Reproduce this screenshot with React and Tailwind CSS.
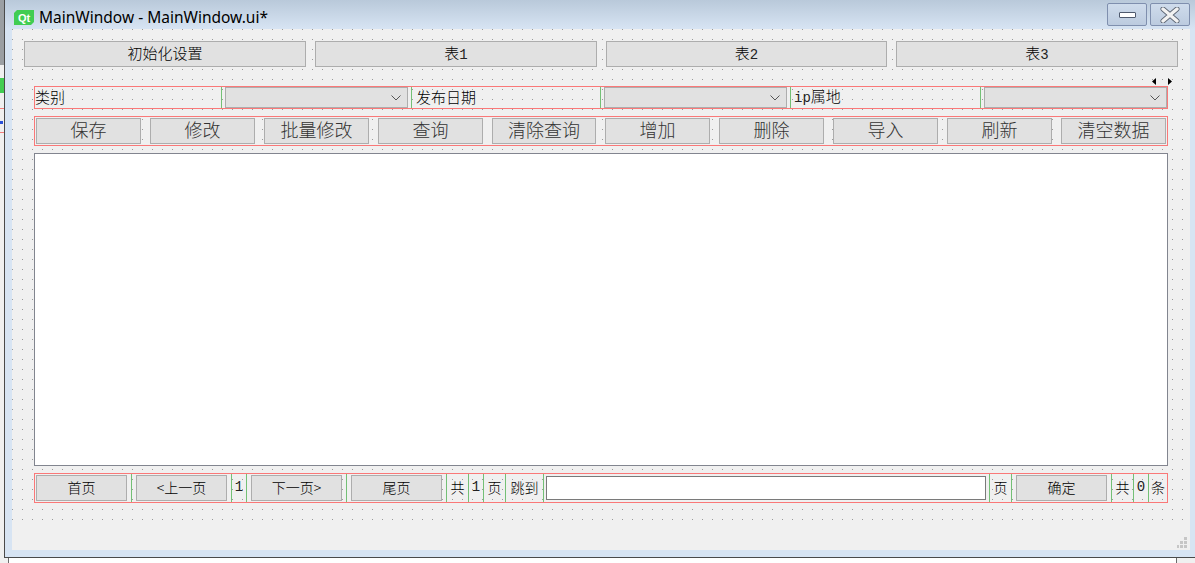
// App.jsx - Qt Designer form preview
import React from "react";

const cjk = "font-['Noto_Sans_CJK_SC','Liberation_Sans',sans-serif]";

function Sep({ className = "" }) {
  return <div className={`w-px self-stretch shrink-0 bg-[#74c076] ${className}`}></div>;
}

function Btn({ className = "", children }) {
  return (
    <button className={`shrink-0 h-[26px] border border-[#adadad] bg-[#e1e1e1] text-center font-light ${className}`}>
      {children}
    </button>
  );
}

function Digit({ children }) {
  return <span className="font-['Liberation_Mono',monospace] text-[14px] text-[#222]">{children}</span>;
}

function Cell({ w, children }) {
  return (
    <div className={`shrink-0 flex items-center justify-center pb-[1px] text-[14px] font-light text-black ${w}`}>
      {children}
    </div>
  );
}

function Combo() {
  return (
    <div className="w-[183px] h-full shrink-0 border border-[#adadad] bg-[#e1e1e1] flex items-center justify-end pr-[5px]">
      <svg width="12" height="8" viewBox="0 0 12 8" fill="none">
        <path d="M1.5 1.5 L6 6 L10.5 1.5" stroke="#555" strokeWidth="1" />
      </svg>
    </div>
  );
}

const actions = [
  ["保存", "w-[105px]"],
  ["修改", "w-[105px]"],
  ["批量修改", "w-[105px]"],
  ["查询", "w-[105px]"],
  ["清除查询", "w-[104px]"],
  ["增加", "w-[105px]"],
  ["删除", "w-[105px]"],
  ["导入", "w-[105px]"],
  ["刷新", "w-[105px]"],
  ["清空数据", "w-[105px]"],
];

export default function App() {
  return (
    <div className={`w-[1195px] h-[563px] flex flex-col bg-white overflow-hidden ${cjk}`}>
      <div className="h-[558px] flex shrink-0">
        {/* window behind, only a sliver shows */}
        <div className="w-[4px] shrink-0 flex flex-col bg-[#f0f0f0]">
          <div className="h-[65px] bg-[#9b9fa3]"></div>
          <div className="h-[13px]"></div>
          <div className="h-[15px] bg-[#41cd52]"></div>
          <div className="h-[16px] border-b border-[#f47c7c]"></div>
          <div className="h-[12px]"></div>
          <div className="h-[3px] w-[3px] bg-[#2a50d8]"></div>
          <div className="h-[9px] border-b border-[#f47c7c]"></div>
        </div>

        <div className="relative flex-1 flex flex-col border-l border-b border-[#4a4a4a] bg-[#d7e4f3]">
          {/* title bar */}
          <div className="h-[29px] shrink-0 flex items-start justify-between pl-[9px] pr-[5px] bg-gradient-to-b from-[#b9c9da] to-[#d7e4f3]">
            <div className="flex items-center h-[29px] pt-[6px]">
              <svg width="20" height="15" viewBox="0 0 20 15">
                <path d="M3 0 H20 V12 L17 15 H0 V3 Z" fill="#41cd52" />
                <text x="10" y="11.5" textAnchor="middle" fontSize="11" fontFamily="Liberation Sans" fontWeight="700" fill="#fff">Qt</text>
              </svg>
              <span className="ml-[5px] text-[15.5px] text-black font-['Noto_Sans',sans-serif]">MainWindow - MainWindow.ui*</span>
            </div>
            <div className="flex gap-[3px] pt-[3px]">
              <div className="w-[40px] h-[23px] rounded-[2px] border border-[#7f8fae] bg-gradient-to-b from-[#cfdcec] to-[#bccbdf] flex items-center justify-center">
                <div className="w-[17px] h-[6px] rounded-[1px] border border-[#4f5a6e] bg-white"></div>
              </div>
              <div className="w-[40px] h-[23px] rounded-[2px] border border-[#7f8fae] bg-gradient-to-b from-[#cfdcec] to-[#bccbdf] flex items-center justify-center">
                <svg width="20" height="16" viewBox="0 0 20 16">
                  <path d="M3 2 L17 14 M17 2 L3 14" stroke="#5a6472" strokeWidth="5" strokeLinecap="round" fill="none" />
                  <path d="M3 2 L17 14 M17 2 L3 14" stroke="#f2f2f2" strokeWidth="3.4" strokeLinecap="round" fill="none" />
                </svg>
              </div>
            </div>
          </div>

          {/* client area */}
          <div className="relative ml-[7px] mr-[5px] h-[521px] shrink-0 bg-[#f0f0f0]">
            <div className="h-[493px] w-[1173px] pt-[12px] bg-[radial-gradient(circle_at_0.5px_0.5px,#999999_0.5px,transparent_0.7px)] bg-[size:10px_10px] bg-[position:0px_0px]">
              {/* top tabs */}
              <div className="flex gap-[9px] pl-[12px]">
                <Btn className="w-[282px] pb-[1px] text-[15px] text-black">初始化设置</Btn>
                <Btn className="w-[282px] pb-[1px] text-[15px] text-black">表<Digit>1</Digit></Btn>
                <Btn className="w-[281px] pb-[1px] text-[15px] text-black">表<Digit>2</Digit></Btn>
                <Btn className="w-[282px] pb-[1px] text-[15px] text-black">表<Digit>3</Digit></Btn>
              </div>

              {/* filters */}
              <div className="mt-[19px] ml-[22px] w-[1134px] h-[23px] flex border border-[#fa7878] text-[15px] font-light text-black">
                <div className="w-[186px] shrink-0 flex items-center pb-[1px]">类别</div>
                <Sep className="mr-[3px]" />
                <Combo />
                <Sep className="ml-[3px]" />
                <div className="w-[188px] shrink-0 flex items-center pb-[1px] pl-[4px]">发布日期</div>
                <Sep className="mr-[3px]" />
                <Combo />
                <Sep className="ml-[3px]" />
                <div className="w-[189px] shrink-0 flex items-center pb-[1px] pl-[3px]">
                  <span><Digit>ip</Digit>属地</span>
                </div>
                <Sep className="mr-[3px]" />
                <Combo />
              </div>

              {/* actions */}
              <div className="mt-[7px] ml-[22px] w-[1134px] h-[30px] flex items-center gap-[9px] pl-[1px] border border-[#fa7878]">
                {actions.map(([label, w]) => (
                  <Btn key={label} className={`${w} pb-[5px] text-[18px] leading-[18px] text-[#333333]`}>{label}</Btn>
                ))}
              </div>

              {/* table */}
              <div className="mt-[7px] ml-[22px] w-[1134px] h-[313px] bg-white border border-[#82858f]"></div>

              {/* pager */}
              <div className="mt-[7px] ml-[22px] w-[1134px] h-[30px] flex items-center pl-[1px] border border-[#fa7878] text-[14px] text-black">
                <Btn className="w-[91px] pb-[1px]">首页</Btn>
                <Sep className="mx-[4px]" />
                <Btn className="w-[91px] pb-[1px]">&lt;上一页</Btn>
                <Sep className="ml-[4px]" />
                <Cell w="w-[14px]"><Digit>1</Digit></Cell>
                <Sep className="mr-[4px]" />
                <Btn className="w-[91px] pb-[1px]">下一页&gt;</Btn>
                <Sep className="mx-[4px]" />
                <Btn className="w-[91px] pb-[1px]">尾页</Btn>
                <Sep className="ml-[4px]" />
                <Cell w="w-[21px]">共</Cell>
                <Sep />
                <Cell w="w-[14px]"><Digit>1</Digit></Cell>
                <Sep />
                <Cell w="w-[21px]">页</Cell>
                <Sep />
                <Cell w="w-[37px]">跳到</Cell>
                <Sep className="mr-[2px]" />
                <input className="w-[440px] h-[24px] shrink-0 bg-white border border-[#7a7a7a] outline-none" />
                <Sep className="ml-[3px]" />
                <Cell w="w-[21px]">页</Cell>
                <Sep className="mr-[4px]" />
                <Btn className="w-[91px] pb-[1px]">确定</Btn>
                <Sep className="ml-[4px]" />
                <Cell w="w-[21px]">共</Cell>
                <Sep />
                <Cell w="w-[14px]"><Digit>0</Digit></Cell>
                <Sep />
                <Cell w="w-[18px]">条</Cell>
              </div>
            </div>

            {/* designer splitter handles */}
            <svg className="absolute left-[1140px] top-[49px]" width="20" height="7" viewBox="0 0 20 7">
              <path d="M0 3.5 L4 0 V7 Z M20 3.5 L16 0 V7 Z" fill="#000" />
            </svg>

            {/* size grip */}
            <svg className="absolute right-[3px] bottom-[2px]" width="10" height="11" viewBox="0 0 10 11" fill="#c6c6c6">
              <rect x="7" y="0" width="3" height="3" />
              <rect x="3" y="4" width="3" height="3" />
              <rect x="7" y="4" width="3" height="3" />
              <rect x="0" y="8" width="2" height="3" />
              <rect x="3" y="8" width="3" height="3" />
              <rect x="7" y="8" width="3" height="3" />
            </svg>
          </div>
        </div>
      </div>

      <div className="flex-1 flex">
        <div className="w-[9px] shrink-0 bg-[#f0f0f0] border-r border-[#6b6b6b]"></div>
        <div className="flex-1"></div>
        <div className="w-[19px] shrink-0 bg-[#f0f0f0] border-l border-[#6b6b6b]"></div>
      </div>
    </div>
  );
}
